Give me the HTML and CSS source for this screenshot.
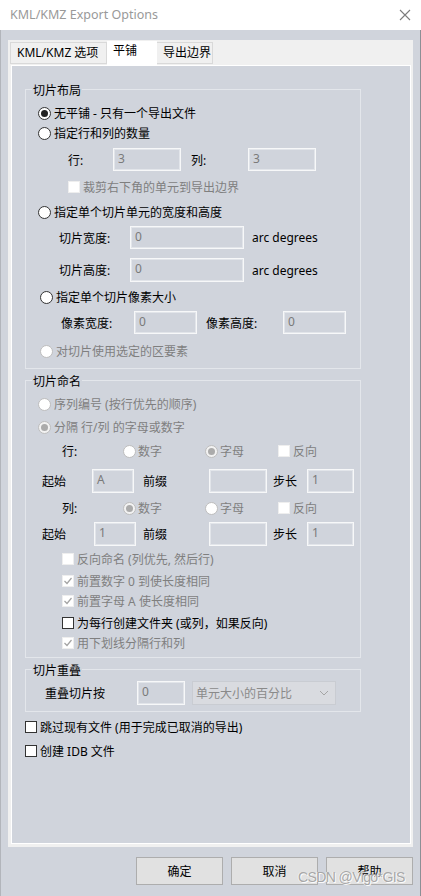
FILE: index.html
```html
<!DOCTYPE html>
<html>
<head>
<meta charset="utf-8">
<link rel="stylesheet" href="styles.css">
</head>
<body>
<div class="window">
  <div class="titlebar">
    <span class="title">KML/KMZ Export Options</span>
    <svg class="close" width="12" height="12" viewBox="0 0 12 12"><path d="M1 1 L11 11 M11 1 L1 11" stroke="#7c7c7c" stroke-width="1.1" fill="none"/></svg>
  </div>
  <div class="client">
    <div class="tabctl">
      <div class="tabstrip">
        <div class="tab first">KML/KMZ 选项</div>
        <div class="tab active">平铺</div>
        <div class="tab">导出边界</div>
      </div>
      <div class="page">
        <div class="group g1">
          <div class="legend">切片布局</div>
          <div class="row h20 mt5 pl12"><span class="radio on"></span><span>无平铺 - 只有一个导出文件</span></div>
          <div class="row h20 pl12"><span class="radio"></span><span>指定行和列的数量</span></div>
          <div class="row h23 mt5 pl42">
            <span class="lbl w45">行:</span><span class="input w68">3</span>
            <span class="lbl ml10 w57">列:</span><span class="input w68">3</span>
          </div>
          <div class="row h20 mt6 pl42"><span class="check dis"></span><span class="dtext">裁剪右下角的单元到导出边界</span></div>
          <div class="row h20 mt5 pl12"><span class="radio"></span><span>指定单个切片单元的宽度和高度</span></div>
          <div class="row h23 mt4 pl33">
            <span class="lbl w71">切片宽度:</span><span class="input w114">0</span><span class="ml8">arc degrees</span>
          </div>
          <div class="row h24 mt9 pl33">
            <span class="lbl w71">切片高度:</span><span class="input w114">0</span><span class="ml8">arc degrees</span>
          </div>
          <div class="row h20 mt5 pl14"><span class="radio"></span><span>指定单个切片像素大小</span></div>
          <div class="row h23 mt4 pl35">
            <span class="lbl w73">像素宽度:</span><span class="input w63">0</span>
            <span class="lbl ml9 w77">像素高度:</span><span class="input w63">0</span>
          </div>
          <div class="row h20 mt7 pl14"><span class="radio dis"></span><span class="dtext">对切片使用选定的区要素</span></div>
        </div>

        <div class="group g2">
          <div class="legend">切片命名</div>
          <div class="row h20 mt5 pl12"><span class="radio dis"></span><span class="dtext">序列编号 (按行优先的顺序)</span></div>
          <div class="row h20 mt3 pl12"><span class="radio dis on"></span><span class="dtext">分隔 行/列 的字母或数字</span></div>
          <div class="row h20 mt4 pl36">
            <span class="lbl w61">行:</span>
            <span class="opt w82"><span class="radio dis sm"></span><span class="dtext">数字</span></span>
            <span class="opt w73"><span class="radio dis on sm"></span><span class="dtext">字母</span></span>
            <span class="opt"><span class="check dis"></span><span class="dtext">反向</span></span>
          </div>
          <div class="row h24 mt8 pl16">
            <span class="lbl w50">起始</span><span class="input w42">A</span>
            <span class="lbl ml9 w66">前缀</span><span class="input w58"></span>
            <span class="lbl ml6 w34">步长</span><span class="input w47">1</span>
          </div>
          <div class="row h20 mt5 pl36">
            <span class="lbl w61">列:</span>
            <span class="opt w82"><span class="radio dis on sm"></span><span class="dtext">数字</span></span>
            <span class="opt w73"><span class="radio dis sm"></span><span class="dtext">字母</span></span>
            <span class="opt"><span class="check dis"></span><span class="dtext">反向</span></span>
          </div>
          <div class="row h24 mt4 pl16">
            <span class="lbl w52">起始</span><span class="input w42">1</span>
            <span class="lbl ml7 w66">前缀</span><span class="input w58"></span>
            <span class="lbl ml6 w34">步长</span><span class="input w47">1</span>
          </div>
          <div class="row h20 mt3 pl36"><span class="check dis"></span><span class="dtext">反向命名 (列优先, 然后行)</span></div>
          <div class="row h20 mt2 pl36"><span class="check dis"><svg width="10" height="10" viewBox="0 0 10 10"><path d="M1.5 5 L4 7.5 L8.5 2" stroke="#a3a3a3" stroke-width="1.2" fill="none"/></svg></span><span class="dtext">前置数字 0 到使长度相同</span></div>
          <div class="row h20 pl36"><span class="check dis"><svg width="10" height="10" viewBox="0 0 10 10"><path d="M1.5 5 L4 7.5 L8.5 2" stroke="#a3a3a3" stroke-width="1.2" fill="none"/></svg></span><span class="dtext">前置字母 A 使长度相同</span></div>
          <div class="row h20 mt2 pl36"><span class="check"></span><span>为每行创建文件夹 (或列，如果反向)</span></div>
          <div class="row h20 pl36"><span class="check dis"><svg width="10" height="10" viewBox="0 0 10 10"><path d="M1.5 5 L4 7.5 L8.5 2" stroke="#a3a3a3" stroke-width="1.2" fill="none"/></svg></span><span class="dtext">用下划线分隔行和列</span></div>
        </div>

        <div class="group g3">
          <div class="legend">切片重叠</div>
          <div class="row h24 mt3 pl19">
            <span class="lbl w92">重叠切片按</span><span class="input w48">0</span>
            <span class="select"><span class="seltext">单元大小的百分比</span>
              <svg width="10" height="6" viewBox="0 0 10 6"><path d="M1 1 L5 5 L9 1" stroke="#a5a5a5" stroke-width="1" fill="none"/></svg>
            </span>
          </div>
        </div>

        <div class="row h20 mt5 outer"><span class="check"></span><span>跳过现有文件 (用于完成已取消的导出)</span></div>
        <div class="row h20 mt4 outer"><span class="check"></span><span>创建 IDB 文件</span></div>
      </div>
    </div>
    <div class="buttons">
      <span class="btn">确定</span>
      <span class="btn">取消</span>
      <span class="btn">帮助</span>
    </div>
  </div>
  <div class="watermark">CSDN @Vigo*GIS</div>
</div>
</body>
</html>
```
FILE: styles.css
```css
* { box-sizing: border-box; }
html, body { margin: 0; padding: 0; }
body {
  font-family: "Noto Sans", "Noto Sans CJK SC", sans-serif;
  font-size: 12px;
  color: #000;
  background: #d0d4dc;
}
.window {
  width: 421px;
  height: 896px;
  position: relative;
  background: #d0d4dc;
  overflow: hidden;
}
.titlebar {
  height: 30px;
  background: #fff;
  display: flex;
  align-items: center;
  justify-content: space-between;
  padding: 0 10px 0 10px;
}
.title { color: #999; font-size: 12.5px; line-height: 30px; }

.client {
  height: 866px;
  border-left: 1px solid #b2b5bb;
  border-right: 1px solid #8c8f95;
  padding: 10px 7px 0 7px;
}
.tabctl {
  background: #f0f0f0;
  height: 807px;
  padding-bottom: 3px;
}
.tabstrip {
  height: 25px;
  display: flex;
  align-items: flex-start;
  padding-left: 2px;
}
.tab {
  height: 22px;
  margin-top: 2px;
  border: 1px solid #d9d9d9;
  background: #f0f0f0;
  line-height: 20px;
  padding: 0 6px;
  white-space: nowrap;
}
.tab.first { width: 97px; }
.tab.active {
  width: 50px;
  height: 25px;
  margin-top: 1px;
  background: #fff;
  border: none;
  line-height: 20px;
  padding-left: 6px;
}
.tab:last-child { width: 56px; border-left: none; }
.page {
  margin: 0 2px 0 3px;
  height: 779px;
  border: 1px solid #fff;
  background: #d0d4dc;
}
.group {
  border: 1px solid #e3e6eb;
  margin: 0 49px 0 13px;
}
.g1 { margin-top: 23px; padding-bottom: 7px; }
.g2 { margin-top: 11px; padding-bottom: 4px; }
.g3 { margin-top: 11px; padding-bottom: 6px; }
.legend {
  display: block;
  width: fit-content;
  height: 18px;
  line-height: 15px;
  margin: -10px 0 0 6px;
  padding: 3px 1px 0 1px;
  background: #d0d4dc;
}
.row {
  display: flex;
  align-items: center;
  white-space: nowrap;
}
.outer { margin-left: 13px; }
.h20 { height: 20px; }
.h23 { height: 23px; }
.h24 { height: 24px; }
.mt2 { margin-top: 2px; }
.mt3 { margin-top: 3px; }
.mt4 { margin-top: 4px; }
.mt5 { margin-top: 5px; }
.mt6 { margin-top: 6px; }
.mt7 { margin-top: 7px; }
.mt8 { margin-top: 8px; }
.mt9 { margin-top: 9px; }
.pl12 { padding-left: 12px; }
.pl14 { padding-left: 14px; }
.pl16 { padding-left: 16px; }
.pl19 { padding-left: 19px; }
.pl33 { padding-left: 33px; }
.pl35 { padding-left: 35px; }
.pl36 { padding-left: 36px; }
.pl42 { padding-left: 42px; }
.ml6 { margin-left: 6px; }
.ml7 { margin-left: 7px; }
.ml8 { margin-left: 8px; }
.ml9 { margin-left: 9px; }
.ml10 { margin-left: 10px; }
.lbl { display: inline-block; flex: none; }
.w34 { width: 34px; }
.w42 { width: 42px; }
.w45 { width: 45px; }
.w47 { width: 47px; }
.w48 { width: 48px; }
.w50 { width: 50px; }
.w52 { width: 52px; }
.w57 { width: 57px; }
.w58 { width: 58px; }
.w61 { width: 61px; }
.w63 { width: 63px; }
.w66 { width: 66px; }
.w68 { width: 68px; }
.w71 { width: 71px; }
.w73 { width: 73px; }
.w77 { width: 77px; }
.w82 { width: 82px; }
.w92 { width: 92px; }
.w114 { width: 114px; }
.input {
  flex: none;
  height: 100%;
  border: 1px solid #f7f8f9;
  box-shadow: inset 0 0 0 1px #e2e5ea;
  color: #7a7a7a;
  padding: 1px 0 0 4px;
  line-height: 18px;
}
.dtext { color: #7f7f7f; }
.opt { display: inline-flex; align-items: center; flex: none; }
.radio {
  flex: none;
  width: 13px;
  height: 13px;
  border-radius: 50%;
  border: 1px solid #333;
  background: #fff;
  margin-right: 3px;
  position: relative;
}
.radio.sm { margin-right: 2px; }
.radio.on::after {
  content: "";
  position: absolute;
  left: 2px;
  top: 2px;
  width: 7px;
  height: 7px;
  border-radius: 50%;
  background: #222;
}
.radio.dis { border-color: #bdbdbd; background: #fff; }
.radio.dis.on { background: #f2f2f2; }
.radio.dis.on::after { background: #ababab; }
.check {
  flex: none;
  width: 12px;
  height: 12px;
  border: 1px solid #333;
  background: #fff;
  margin-right: 3px;
  display: flex;
  align-items: center;
  justify-content: center;
}
.check.dis { border-color: #eeeeee; }
.select {
  flex: none;
  margin-left: 7px;
  width: 144px;
  height: 100%;
  background: #d9dbe0;
  border: 1px solid #c9ccd2;
  display: flex;
  align-items: center;
  justify-content: space-between;
  padding: 0 6px 0 3px;
  color: #8a8a8a;
}
.buttons {
  display: flex;
  justify-content: flex-end;
  gap: 8px;
  margin-top: 10px;
}
.btn {
  width: 87px;
  height: 28px;
  background: #e1e1e1;
  border: 1px solid #adadad;
  display: flex;
  align-items: center;
  justify-content: center;
}
.watermark {
  position: absolute;
  left: 298px;
  top: 869px;
  font-family: "Liberation Sans", sans-serif;
  font-size: 14px;
  letter-spacing: -0.6px;
  color: #a2a2a2;
  text-shadow: 1px 1px 0 #fff, -1px 0 0 #f4f4f4;
  opacity: 0.9;
}
```
